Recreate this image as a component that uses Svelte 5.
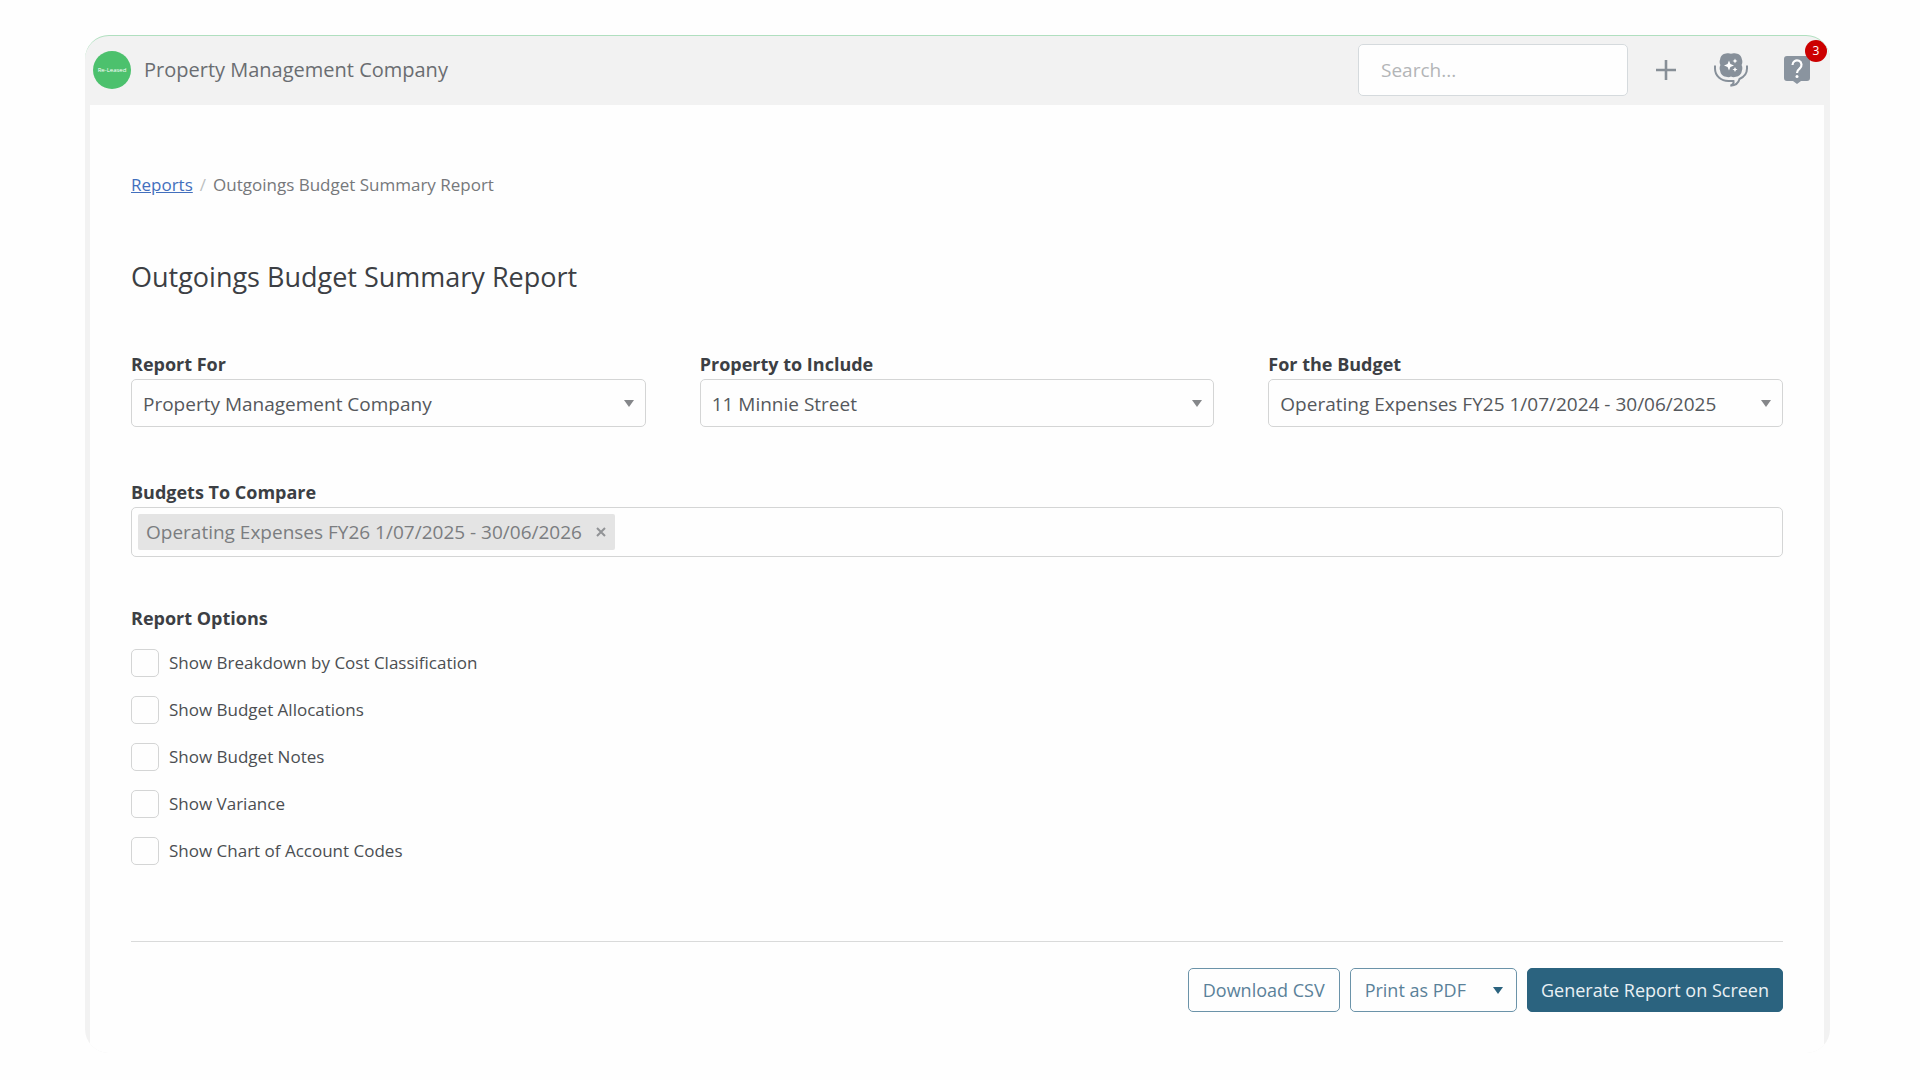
<script lang="ts">
	const companies = ['Property Management Company'];
	const properties = ['11 Minnie Street'];
	const budgets = [
		'Operating Expenses FY25 1/07/2024 - 30/06/2025',
		'Operating Expenses FY26 1/07/2025 - 30/06/2026'
	];

	let company = $state(companies[0]);
	let property = $state(properties[0]);
	let budget = $state(budgets[0]);
	let compared = $state([budgets[1]]);

	let options = $state([
		{ id: 'breakdown', label: 'Show Breakdown by Cost Classification', checked: false },
		{ id: 'allocations', label: 'Show Budget Allocations', checked: false },
		{ id: 'notes', label: 'Show Budget Notes', checked: false },
		{ id: 'variance', label: 'Show Variance', checked: false },
		{ id: 'codes', label: 'Show Chart of Account Codes', checked: false }
	]);

	const removeBudget = (name: string) => {
		compared = compared.filter((item) => item !== name);
	};
</script>

{#snippet caret()}
	<svg class="caret" width="10" height="7" viewBox="0 0 10 7" aria-hidden="true">
		<path d="M0 0h10L5 7z" fill="currentColor" />
	</svg>
{/snippet}

<div class="app-frame">
	<header class="topbar">
		<div class="logo">Re-Leased</div>
		<div class="company">Property Management Company</div>
		<input class="search" type="search" placeholder="Search..." aria-label="Search" />
		<nav class="actions">
			<button class="icon-button" aria-label="Add">
				<svg width="20" height="20" viewBox="0 0 20 20" stroke="#878f97" stroke-width="2.600">
					<path d="M10 0v20M0 10h20" />
				</svg>
			</button>
			<button class="icon-button" aria-label="Assistant">
				<svg width="34" height="34" viewBox="0 0 34 34">
					<path
						d="M12 .5c2-.5 3.500-.5 5 .3 1.500-.8 3-.8 5-.3 3 .3 5.500 2.500 5.800 5.500.8 2 .8 4-.2 6 1 2 1 4 .2 6-.3 3-2.800 5.500-5.800 5.800-2 .5-3.500.5-5-.3-1.500.8-3 .8-5 .3-3-.3-5.500-2.800-5.800-5.800-.8-2-.8-4 .2-6-1-2-1-4-.2-6C6.500 3 9 .8 12 .5z"
						fill="#87909a"
					/>
					<path
						d="M15 7.500l1.400 3.600L20 12.500l-3.600 1.400L15 17.500l-1.400-3.600L10 12.500l3.600-1.400zM21 5.500l.8 1.700 1.700.8-1.700.8-.8 1.700-.8-1.700-1.700-.8 1.700-.8zM21 14l.8 1.700 1.700.8-1.700.8-.8 1.700-.8-1.700-1.700-.8 1.700-.8z"
						fill="#fff"
					/>
					<path
						d="M1 12.500v3c0 7.500 6 12.500 13.500 12.500h5c.5 2-.5 3.500-3 4.700 5-.2 8-2.700 9-6.700 4.500-2 7.500-6 7.500-10.500v-3"
						fill="none"
						stroke="#87909a"
						stroke-width="2"
					/>
				</svg>
			</button>
			<button class="icon-button" aria-label="Help, 3 new">
				<svg width="26" height="28" viewBox="0 0 26 28">
					<path
						d="M3 0h20a3 3 0 0 1 3 3v19a3 3 0 0 1-3 3h-6l-4 3-4-3H3a3 3 0 0 1-3-3V3a3 3 0 0 1 3-3z"
						fill="#8a949f"
					/>
					<path
						d="M8.500 9a4.500 4.500 0 1 1 7.200 3.500C14 13.800 13 14.500 13 17"
						fill="none"
						stroke="#fff"
						stroke-width="2.200"
					/>
					<circle cx="13" cy="20.500" r="1.500" fill="#fff" />
				</svg>
				<span class="badge">3</span>
			</button>
		</nav>
	</header>

	<main class="page">
		<nav class="breadcrumb" aria-label="Breadcrumb">
			<a href="#reports">Reports</a>
			<span class="divider">/</span>
			<span>Outgoings Budget Summary Report</span>
		</nav>

		<h1>Outgoings Budget Summary Report</h1>

		<div class="filters">
			<div class="field">
				<label for="report-for">Report For</label>
				<div class="select">
					<select id="report-for" bind:value={company}>
						{#each companies as name}
							<option>{name}</option>
						{/each}
					</select>
					{@render caret()}
				</div>
			</div>
			<div class="field">
				<label for="property">Property to Include</label>
				<div class="select">
					<select id="property" bind:value={property}>
						{#each properties as name}
							<option>{name}</option>
						{/each}
					</select>
					{@render caret()}
				</div>
			</div>
			<div class="field">
				<label for="budget">For the Budget</label>
				<div class="select">
					<select id="budget" bind:value={budget}>
						{#each budgets as name}
							<option>{name}</option>
						{/each}
					</select>
					{@render caret()}
				</div>
			</div>
		</div>

		<div class="field compare">
			<label for="compare">Budgets To Compare</label>
			<div class="tags">
				{#each compared as name (name)}
					<span class="tag">
						{name}
						<button aria-label="Remove {name}" onclick={() => removeBudget(name)}>
							<svg width="10" height="10" viewBox="0 0 10 10" stroke="currentColor" stroke-width="2">
								<path d="M1 1l8 8M9 1l-8 8" />
							</svg>
						</button>
					</span>
				{/each}
				<input id="compare" type="text" />
			</div>
		</div>

		<fieldset class="options">
			<legend>Report Options</legend>
			{#each options as option (option.id)}
				<label class="option" for={option.id}>
					<input id={option.id} type="checkbox" bind:checked={option.checked} />
					<span>{option.label}</span>
				</label>
			{/each}
		</fieldset>

		<footer class="footer">
			<button class="btn">Download CSV</button>
			<div class="btn-group">
				<button class="btn">Print as PDF</button>
				<button class="toggle" aria-label="More print options">{@render caret()}</button>
			</div>
			<button class="btn primary">Generate Report on Screen</button>
		</footer>
	</main>
</div>

<style>
	:global(body) {
		background: #fefefe;
	}

	.app-frame,
	.app-frame button,
	.app-frame input,
	.app-frame select {
		font-family: 'Segoe UI', 'Open Sans', 'Noto Sans', sans-serif;
	}

	.app-frame {
		box-sizing: border-box;
		margin: 35px 90px 36px 85px;
		padding: 0 6px 0 5px;
		border-top: 1px solid #b0dfbf;
		border-radius: 24px;
		background: #f2f2f2;
		color: #3c3f44;
		overflow: hidden;
	}

	.topbar {
		box-sizing: border-box;
		display: flex;
		align-items: center;
		height: 69px;
		padding: 0 14px 2px 3px;
	}

	.logo {
		display: flex;
		align-items: center;
		justify-content: center;
		width: 38px;
		height: 38px;
		border-radius: 50%;
		background: #4cc16d;
		color: #fff;
		font-size: 6px;
	}

	.company {
		margin-left: 13px;
		color: #6a6d71;
		font-size: 20px;
	}

	.search {
		box-sizing: border-box;
		width: 270px;
		height: 52px;
		margin-left: auto;
		padding: 0 22px;
		border: 1px solid #d5dadd;
		border-radius: 5px;
		background: #fefefe;
		font-size: 19px;
	}

	.search::placeholder {
		color: #b3b5b7;
	}

	.actions {
		display: flex;
		align-items: center;
		gap: 36px;
		margin-left: 28px;
	}

	.icon-button {
		position: relative;
		display: flex;
		padding: 0;
		border: none;
		background: none;
		cursor: pointer;
	}

	.icon-button:first-child {
		margin-right: 2px;
	}

	.badge {
		position: absolute;
		top: -16px;
		right: -17px;
		width: 22px;
		border-radius: 50%;
		background: #cc0000;
		color: #fff;
		font-size: 12px;
		line-height: 22px;
		text-align: center;
	}

	.page {
		padding: 67px 41px 32px;
		background: #fefefe;
	}

	.breadcrumb {
		display: flex;
		gap: 7px;
		color: #76787b;
		font-size: 17px;
		line-height: 26px;
	}

	.breadcrumb a {
		color: #426fbd;
	}

	.divider {
		color: #bcbec0;
	}

	h1 {
		margin: 59px 0 0;
		font-size: 27px;
		font-weight: 400;
		line-height: 40px;
	}

	.filters {
		display: grid;
		grid-template-columns: repeat(3, minmax(0, 1fr));
		gap: 54px;
		margin-top: 53px;
	}

	.field label,
	legend {
		display: block;
		padding: 0 0 1px;
		color: #3c3f44;
		font-size: 18px;
		font-weight: 700;
		line-height: 28px;
	}

	.select {
		position: relative;
	}

	.select select {
		box-sizing: border-box;
		display: block;
		width: 100%;
		height: 48px;
		padding: 2px 40px 0 11px;
		border: 1px solid #d4d5d5;
		border-radius: 5px;
		appearance: none;
		background: #fefefe;
		color: #55585c;
		font-size: 19px;
	}

	.select .caret {
		position: absolute;
		top: 21px;
		right: 12px;
		color: #85878a;
		pointer-events: none;
	}

	.compare {
		margin-top: 51px;
	}

	.tags {
		display: flex;
		align-items: center;
		flex-wrap: wrap;
		gap: 6px;
		padding: 6px;
		border: 1px solid #d4d5d5;
		border-radius: 5px;
	}

	.tag {
		display: flex;
		align-items: center;
		gap: 14px;
		padding: 0 9px 0 8px;
		border-radius: 2px;
		background: #e4e4e4;
		color: #7b7d80;
		font-size: 19px;
		line-height: 36px;
	}

	.tag button {
		display: flex;
		padding: 0;
		border: none;
		background: none;
		color: #919396;
		cursor: pointer;
	}

	.tags input {
		flex: 1;
		min-width: 80px;
		border: none;
		outline: none;
		background: transparent;
		font-size: 19px;
	}

	.options {
		display: flex;
		flex-direction: column;
		gap: 19px;
		margin: 47px 0 0;
		padding: 0;
		border: none;
	}

	legend {
		margin-bottom: 16px;
	}

	.option {
		display: flex;
		align-items: center;
		gap: 10px;
		align-self: flex-start;
		font-size: 17px;
		line-height: 28px;
		color: #4b4e52;
	}

	.option input {
		box-sizing: border-box;
		width: 28px;
		height: 28px;
		margin: 0;
		border: 1px solid #d4d5d5;
		border-radius: 5px;
		appearance: none;
		background: #fefefe;
	}

	.option input:checked {
		background: #2b637f;
	}

	.footer {
		display: flex;
		justify-content: flex-end;
		gap: 10px;
		margin-top: 76px;
		padding: 26px 0 9px;
		border-top: 1px solid #d9dada;
	}

	.btn {
		box-sizing: border-box;
		height: 44px;
		padding: 0 14px;
		border: 1px solid #6b93a9;
		border-radius: 5px;
		background: #fefefe;
		color: #5a8199;
		font-size: 18px;
		cursor: pointer;
	}

	.btn-group {
		display: flex;
		box-sizing: border-box;
		height: 44px;
		border: 1px solid #6b93a9;
		border-radius: 5px;
	}

	.btn-group .btn {
		height: 42px;
		border: none;
	}

	.toggle {
		display: flex;
		align-items: center;
		padding: 0 13px;
		border: none;
		background: none;
		color: #2b637f;
		cursor: pointer;
	}

	.btn.primary {
		padding: 0 13px;
		border-color: #2b637f;
		background: #2b637f;
		color: #e9f0f4;
	}
</style>
